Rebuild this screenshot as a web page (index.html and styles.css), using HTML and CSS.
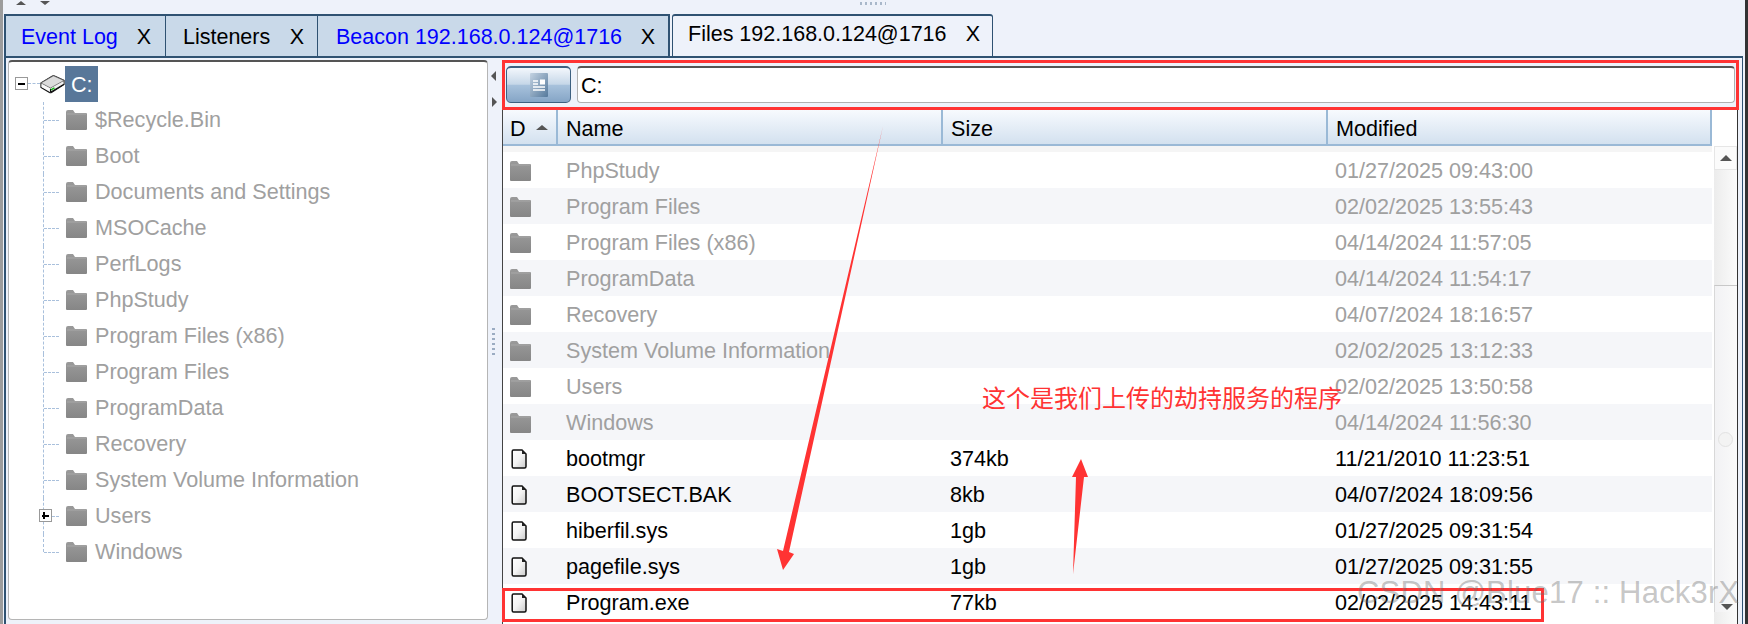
FILE: index.html
```html
<!DOCTYPE html>
<html lang="en">
<head>
<meta charset="utf-8">
<title>Files</title>
<link rel="stylesheet" href="styles.css">
</head>
<body>
<svg class="defs" width="0" height="0" aria-hidden="true">
  <defs>
    <linearGradient id="fg" x1="0" y1="0" x2="0" y2="1"><stop offset="0" stop-color="#9a9a9a"/><stop offset="1" stop-color="#868686"/></linearGradient>
    <linearGradient id="pg" x1="0" y1="0" x2="1" y2="1"><stop offset="0" stop-color="#ffffff"/><stop offset=".5" stop-color="#f4f4f4"/><stop offset="1" stop-color="#c9c9c9"/></linearGradient>
    <linearGradient id="dg" x1="0" y1="0" x2="1" y2="1"><stop offset="0" stop-color="#c4d3e2"/><stop offset="1" stop-color="#55799c"/></linearGradient>
    <symbol id="folder" viewBox="0 0 21 20">
      <path d="M0 2Q0 0 2 0H7L9 3H20Q21 3 21 4V19Q21 20 20 20H1Q0 20 0 19Z" fill="url(#fg)"/>
      <path d="M1 4H20" stroke="#a8a8a8" stroke-width="1"/>
    </symbol>
    <symbol id="file" viewBox="0 0 16 20">
      <path d="M1.2 2.5Q1.2 1 2.5 1H11L15 5V17.5Q15 19 13.5 19H2.5Q1.2 19 1.2 17.5Z" fill="url(#pg)" stroke="#111" stroke-width="1.5"/>
      <path d="M11 1V5H15Z" fill="#222"/>
    </symbol>
  </defs>
</svg>
<div class="shell">
  <div class="strip">
    <div class="strip-arrows">
      <span class="tri-up small"></span>
      <span class="tri-down small"></span>
    </div>
    <div class="grip"></div>
  </div>
  <div class="tabs">
    <div class="tab tab-log"><span class="blue">Event Log</span><span>X</span></div>
    <div class="tab tab-listeners"><span>Listeners</span><span>X</span></div>
    <div class="tab tab-beacon"><span class="blue">Beacon 192.168.0.124@1716</span><span>X</span></div>
    <div class="tab tab-files"><span>Files 192.168.0.124@1716</span><span>X</span></div>
  </div>
  <div class="content">
    <div class="tree">
      <div class="tree-root">
        <span class="box"><span class="box-h"></span></span>
        <span class="root-link"></span>
        <svg class="disk" width="25" height="20" viewBox="0 0 25 20">
          <path d="M1 9L12.5 2Q13.5 1.5 14.5 2L24 6.5V10.5L11.5 18.5Q10.5 19 9.5 18.5L1 13.5Z" fill="#e8e8e8" stroke="#111" stroke-width="1.2"/>
          <path d="M1 9L10.5 14L24 6.5L14 2Q13.5 1.8 13 2Z" fill="#dcdcdc" stroke="#666" stroke-width=".8"/>
          <path d="M1.5 10L10.5 14.8V17.8L1.5 13Z" fill="#fafafa"/>
          <path d="M10.5 14.8L23.5 7.4V10L10.5 18Z" fill="#f0f0f0"/>
          <path d="M10.5 14.8V18.4M10.5 18.2L24 10.2" stroke="#111" stroke-width="1.1" fill="none"/>
          <path d="M11 15.8L14.5 13.8" stroke="#14b814" stroke-width="1.4"/>
        </svg>
        <span class="root-label">C:</span>
      </div>
      <ul class="tree-list">
        <li class="tree-item"><svg class="ico-folder"><use href="#folder"/></svg><span>$Recycle.Bin</span></li>
        <li class="tree-item"><svg class="ico-folder"><use href="#folder"/></svg><span>Boot</span></li>
        <li class="tree-item"><svg class="ico-folder"><use href="#folder"/></svg><span>Documents and Settings</span></li>
        <li class="tree-item"><svg class="ico-folder"><use href="#folder"/></svg><span>MSOCache</span></li>
        <li class="tree-item"><svg class="ico-folder"><use href="#folder"/></svg><span>PerfLogs</span></li>
        <li class="tree-item"><svg class="ico-folder"><use href="#folder"/></svg><span>PhpStudy</span></li>
        <li class="tree-item"><svg class="ico-folder"><use href="#folder"/></svg><span>Program Files (x86)</span></li>
        <li class="tree-item"><svg class="ico-folder"><use href="#folder"/></svg><span>Program Files</span></li>
        <li class="tree-item"><svg class="ico-folder"><use href="#folder"/></svg><span>ProgramData</span></li>
        <li class="tree-item"><svg class="ico-folder"><use href="#folder"/></svg><span>Recovery</span></li>
        <li class="tree-item"><svg class="ico-folder"><use href="#folder"/></svg><span>System Volume Information</span></li>
        <li class="tree-item has-plus"><span class="box box-small"><span class="box-h"></span><span class="box-v"></span></span><svg class="ico-folder"><use href="#folder"/></svg><span>Users</span></li>
        <li class="tree-item is-last"><svg class="ico-folder"><use href="#folder"/></svg><span>Windows</span></li>
      </ul>
    </div>
    <div class="splitter">
      <div class="split-arrows">
        <span class="tri-left"></span>
        <span class="tri-right"></span>
      </div>
      <div class="split-dots"></div>
    </div>
    <div class="pane">
      <div class="toolbar">
        <div class="btn">
          <svg width="18" height="24" viewBox="0 0 18 24">
            <rect width="18" height="24" rx="1" fill="url(#dg)"/>
            <path d="M3 8H8M3 11H8M3 14H15M3 17H15" stroke="#fff" stroke-width="1.3"/>
            <rect x="10" y="6.5" width="5" height="5" fill="#fff"/>
          </svg>
        </div>
        <div class="path-input">C:</div>
      </div>
      <div class="table-wrap">
        <div class="table">
          <div class="thead">
            <div class="th th-d"><span>D</span><span class="tri-up"></span></div>
            <div class="th">Name</div>
            <div class="th">Size</div>
            <div class="th">Modified</div>
          </div>
          <div class="tbody">
            <div class="row dim"><svg class="ico-folder"><use href="#folder"/></svg><span>PhpStudy</span><span></span><span>01/27/2025 09:43:00</span></div>
            <div class="row dim"><svg class="ico-folder"><use href="#folder"/></svg><span>Program Files</span><span></span><span>02/02/2025 13:55:43</span></div>
            <div class="row dim"><svg class="ico-folder"><use href="#folder"/></svg><span>Program Files (x86)</span><span></span><span>04/14/2024 11:57:05</span></div>
            <div class="row dim"><svg class="ico-folder"><use href="#folder"/></svg><span>ProgramData</span><span></span><span>04/14/2024 11:54:17</span></div>
            <div class="row dim"><svg class="ico-folder"><use href="#folder"/></svg><span>Recovery</span><span></span><span>04/07/2024 18:16:57</span></div>
            <div class="row dim"><svg class="ico-folder"><use href="#folder"/></svg><span>System Volume Information</span><span></span><span>02/02/2025 13:12:33</span></div>
            <div class="row dim"><svg class="ico-folder"><use href="#folder"/></svg><span>Users</span><span></span><span>02/02/2025 13:50:58</span></div>
            <div class="row dim"><svg class="ico-folder"><use href="#folder"/></svg><span>Windows</span><span></span><span>04/14/2024 11:56:30</span></div>
            <div class="row"><svg class="ico-file"><use href="#file"/></svg><span>bootmgr</span><span>374kb</span><span>11/21/2010 11:23:51</span></div>
            <div class="row"><svg class="ico-file"><use href="#file"/></svg><span>BOOTSECT.BAK</span><span>8kb</span><span>04/07/2024 18:09:56</span></div>
            <div class="row"><svg class="ico-file"><use href="#file"/></svg><span>hiberfil.sys</span><span>1gb</span><span>01/27/2025 09:31:54</span></div>
            <div class="row"><svg class="ico-file"><use href="#file"/></svg><span>pagefile.sys</span><span>1gb</span><span>01/27/2025 09:31:55</span></div>
            <div class="row"><svg class="ico-file"><use href="#file"/></svg><span>Program.exe</span><span>77kb</span><span>02/02/2025 14:43:11</span></div>
          </div>
        </div>
        <div class="scroll">
          <div class="scroll-btn"><span class="tri-up"></span></div>
          <div class="scroll-track"><div class="scroll-thumb"><span class="knob"></span><span class="tri-down"></span></div></div>
        </div>
      </div>
    </div>
  </div>
</div>
<div class="red-box red-top"></div>
<div class="red-box red-row"></div>
<svg class="arrows" width="1748" height="624" viewBox="0 0 1748 624">
  <path d="M883 126L789 552L794 554L783 570L777 549L783 551Z" fill="#f33"/>
  <path d="M1073 574L1076 477L1072 477L1081 459L1088 477L1084 477Z" fill="#f33"/>
</svg>
<div class="note">这个是我们上传的劫持服务的程序</div>
<div class="watermark">CSDN @Blue17 :: Hack3rX</div>
</body>
</html>
```
FILE: styles.css
```css
* { box-sizing: border-box; }
html, body { margin: 0; padding: 0; }
body {
  position: relative;
  width: 1748px;
  height: 624px;
  overflow: hidden;
  background: #eef2fa;
  font-family: "Liberation Sans", Arial, sans-serif;
  font-size: 21.6px;
  color: #000;
}
.defs { position: absolute; }
.shell {
  height: 624px;
  border-left: 3px solid #9c9c9c;
  border-right: 3px solid #333;
  padding-left: 1px;
  padding-right: 2px;
  display: flex;
  flex-direction: column;
}

/* top strip */
.strip { height: 14px; position: relative; display: flex; justify-content: center; flex: none; }
.strip-arrows { position: absolute; left: 12px; top: 1px; display: flex; gap: 14px; }
.grip {
  width: 26px; height: 3px; margin: 2px 0 0 -1px;
  background: repeating-linear-gradient(90deg, #a9b8ca 0 2px, transparent 2px 5px);
}

/* triangles */
.tri-up, .tri-down { display: block; width: 0; height: 0; border-left: 6px solid transparent; border-right: 6px solid transparent; }
.tri-up { border-bottom: 6px solid #555; }
.tri-down { border-top: 6px solid #555; }
.small { border-left-width: 5px; border-right-width: 5px; }
.tri-up.small { border-bottom-width: 4px; }
.tri-down.small { border-top-width: 4px; }

/* tabs */
.tabs { display: flex; height: 42px; flex: none; }
.tab {
  display: flex;
  justify-content: space-between;
  align-items: center;
  padding: 2px 13px 0 17px;
  background: #c9d9e9;
  border-top: 2px solid #2f5272;
  border-right: 1px solid #2f5272;
  font-size: 21.5px;
}
.tab-log { width: 162px; border-left: 2px solid #2f5272; padding-left: 15px; padding-right: 14px; }
.tab-listeners { width: 152px; }
.tab-beacon { width: 352px; border-right-width: 2px; padding-left: 18px; }
.tab-files {
  width: 321px;
  margin-left: 2px;
  background: #eef2fa;
  border-left: 1px solid #2f5272;
  border-top-left-radius: 3px;
  border-top-right-radius: 3px;
  padding: 0 12px 4px 15px;
}
.blue { color: #0000ff; }

/* content */
.content {
  flex: 1;
  min-height: 0;
  display: flex;
  background: #eef2fa;
  border-top: 2px solid #2f5272;
  border-left: 2px solid #2f5272;
  border-right: 1px solid #2f5272;
  padding: 0 4px 0 2px;
}

/* tree */
.tree {
  width: 480px;
  height: 560px;
  margin-top: 2px;
  flex: none;
  background: #fff;
  border: 1px solid #b5b5b5;
  border-top: 2px solid #555;
  border-radius: 4px;
  position: relative;
  color: #a0a0a0;
}
.tree-root { height: 36px; margin-top: 4px; display: flex; align-items: center; position: relative; padding-left: 31px; }
.box {
  display: flex; align-items: center; justify-content: center;
  position: absolute; left: 6px; top: 11px;
  width: 13px; height: 13px;
  background: #fff; border: 1px solid #999;
}
.box-h { width: 7px; height: 2px; background: #000; }
.box-small { left: 30px; top: 11px; position: absolute; z-index: 1; }
.box-small .box-v { position: absolute; width: 2px; height: 7px; background: #000; left: 4px; top: 2px; }
.root-link { position: absolute; left: 19px; top: 17px; width: 12px; border-top: 1px dashed #a9c0dc; }
.disk { flex: none; }
.root-label {
  margin-left: 0;
  width: 33px; height: 36px;
  background: #587799;
  color: #fff;
  padding-left: 6px;
  line-height: 38px;
}
.tree-list { list-style: none; margin: 0; padding: 0; }
.tree-item {
  height: 36px;
  display: flex;
  align-items: center;
  gap: 9px;
  padding-left: 57px;
  position: relative;
}
.tree-item span:last-child { margin-left: -1px; }
.tree-item::before { content: ""; position: absolute; left: 34px; top: 0; bottom: 0; border-left: 1px dashed #a9c0dc; }
.tree-item.is-last::before { bottom: 18px; }
.tree-item::after { content: ""; position: absolute; left: 35px; top: 18px; width: 15px; border-top: 1px dashed #a9c0dc; }
.ico-folder { width: 21px; height: 20px; flex: none; }
.ico-file { width: 16px; height: 20px; flex: none; }

/* splitter */
.splitter { width: 14px; flex: none; position: relative; }
.split-arrows { position: absolute; left: 3px; top: 13px; display: flex; flex-direction: column; gap: 16px; }
.tri-left, .tri-right { display: block; width: 0; height: 0; border-top: 5px solid transparent; border-bottom: 5px solid transparent; }
.tri-left { border-right: 5px solid #555; }
.tri-right { border-left: 5px solid #555; margin-left: 1px; }
.split-dots {
  position: absolute; left: 4px; top: 270px;
  width: 3px; height: 28px;
  background: repeating-linear-gradient(180deg, #9bacc2 0 2px, transparent 2px 5px);
}

/* right pane */
.pane { width: 1236px; flex: none; display: flex; flex-direction: column; }
.toolbar { height: 52px; flex: none; display: flex; gap: 6px; padding: 8px 3px 0 4px; }
.btn {
  width: 65px; height: 37px; flex: none;
  display: flex; align-items: center; justify-content: center;
  border: 1px solid #3d6080;
  border-top-width: 2px;
  border-radius: 5px;
  background: linear-gradient(180deg, #f3f7fc 0%, #c6d7e8 48%, #a8c2dc 50%, #85a5c6 100%);
}
.path-input {
  flex: 1;
  height: 37px;
  background: #fff;
  border: 1px solid #b0b0b0;
  border-top: 2px solid #555;
  border-radius: 4px;
  padding-left: 3px;
  line-height: 36px;
}
.table-wrap { flex: 1; min-height: 0; display: flex; background: #fff; border-left: 1px solid #444; border-right: 1px solid #333; height: 510px; }
.table { width: 1209px; flex: none; }
.thead {
  height: 36px;
  display: grid;
  grid-template-columns: 53px 385px 385px 386px;
  background: linear-gradient(180deg, #f7fafe 0%, #d3e1ef 100%);
  border-bottom: 2px solid #9ab9d6;
}
.th { display: flex; align-items: center; padding: 3px 0 0 8px; border-left: 2px solid #9ab9d6; }
.th:last-child { border-right: 2px solid #9ab9d6; }
.th-d { border-left: 0; padding-left: 7px; gap: 10px; }
.th-d .tri-up { margin-top: -3px; border-left-width: 6px; border-right-width: 6px; border-bottom-width: 5px; }
.tbody { padding-top: 6px; background: linear-gradient(180deg, #f5f5f5 6px, #fff 6px); }
.row {
  height: 36px;
  padding-top: 2px;
  display: grid;
  grid-template-columns: 54px 384px 385px 386px;
  align-items: center;
}
.row:nth-child(even) { background: #f5f6f9; }
.row .ico-folder { margin-left: 7px; }
.row .ico-file { margin-left: 8px; }
.row span { padding-left: 9px; }
.dim { color: #a0a0a0; }

/* scrollbar */
.scroll { flex: 1; padding-top: 36px; padding-left: 2px; display: flex; flex-direction: column; }
.scroll-btn {
  height: 24px; flex: none;
  display: flex; align-items: center; justify-content: center;
  background: #fbfbfb;
  border: 1px solid #e6e6e6;
}
.scroll-track { flex: 1; background: linear-gradient(90deg, #ececec, #fbfbfb); padding-top: 115px; position: relative; }
.scroll-thumb {
  height: 327px;
  background: linear-gradient(90deg, #f2f2f4, #fafafa);
  border-top: 1px solid #c8c8c8;
  border-left: 1px solid #d8d8d8;
  position: relative;
}
.knob {
  position: absolute; left: 3px; top: 146px;
  width: 15px; height: 15px;
  border-radius: 50%;
  border: 1px solid #e2e2e2;
  background: #f3f3f3;
}
.scroll-thumb .tri-down { position: absolute; left: 6px; bottom: 2px; }

/* annotations laid over the screenshot */
.red-box { position: absolute; border: 3px solid #f33; pointer-events: none; }
.red-top { left: 502px; top: 60px; width: 1237px; height: 50px; }
.red-row { left: 502px; top: 588px; width: 1042px; height: 34px; }
.arrows { position: absolute; left: 0; top: 0; pointer-events: none; }
.note {
  position: absolute;
  left: 982px; top: 383px;
  font-family: "Noto Sans CJK SC", "Liberation Sans", sans-serif;
  font-size: 24px;
  line-height: 28px;
  color: #f33;
  white-space: nowrap;
}
.watermark {
  position: absolute;
  left: 1357px; top: 575px;
  font-size: 31px;
  line-height: 36px;
  color: rgba(110, 110, 110, 0.4);
  white-space: nowrap;
  letter-spacing: 0.2px;
}
```
